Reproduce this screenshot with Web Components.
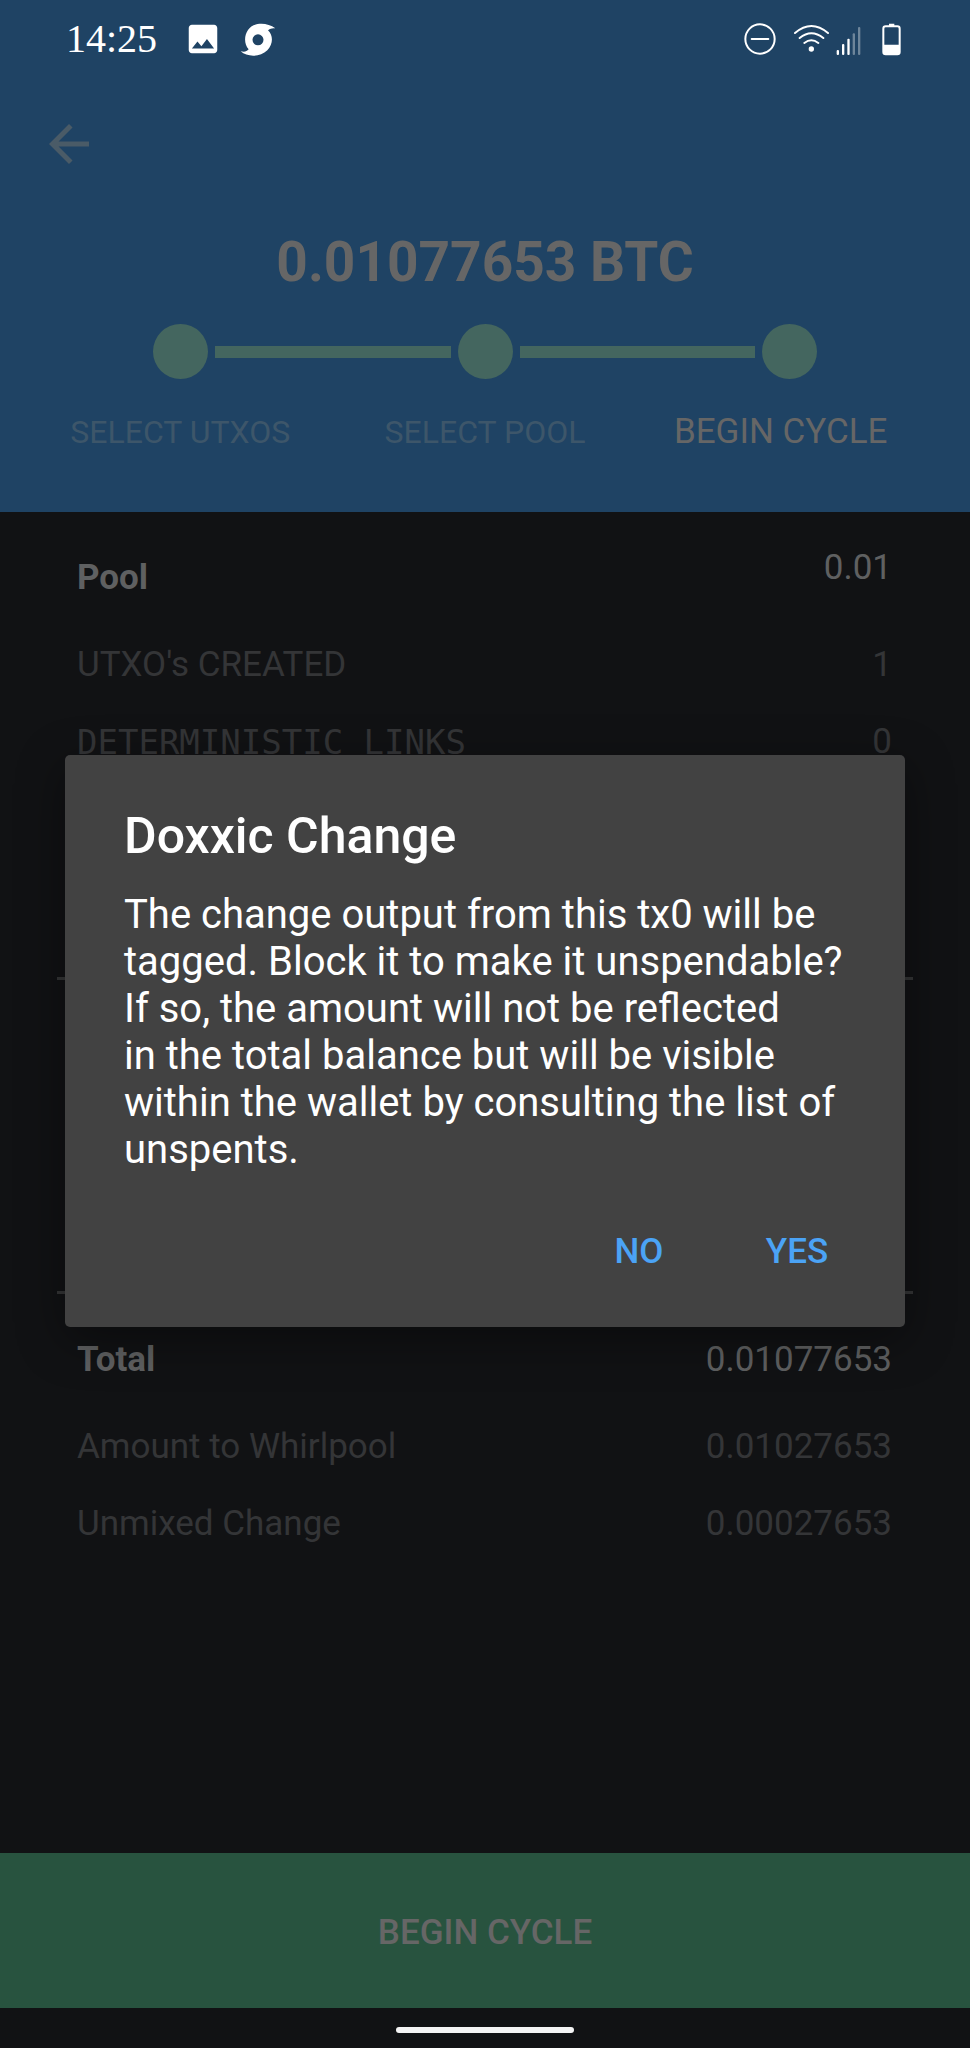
<!DOCTYPE html>
<html lang="en">
<head>
<meta charset="utf-8">
<meta name="viewport" content="width=device-width, initial-scale=1">
<title>Begin Cycle</title>
<style>
  html { background: #111214; }
  body { margin: 0; font-family: Roboto, "Liberation Sans", sans-serif; }
</style>
</head>
<body>
<whirlpool-screen></whirlpool-screen>

<script>
const define = (name, html) => {
  const template = document.createElement('template');
  template.innerHTML = html;
  customElements.define(name, class extends HTMLElement {
    constructor() {
      super();
      this.attachShadow({ mode: 'open' }).append(template.content.cloneNode(true));
    }
  });
};

define('status-bar', `
  <style>
    :host { display: flex; align-items: center; justify-content: space-between; height: 78px; padding: 0 69px 0 66px; color: #fff; }
    div { display: flex; align-items: center; }
    time { font: 40px/44px "Liberation Serif", serif; margin-right: 27px; }
    svg { display: block; height: 33px; fill: currentColor; }
    .image { width: 38px; height: 38px; margin-right: 18px; }
    .line { fill: none; stroke: currentColor; stroke-width: 6; stroke-linecap: round; }
    .dnd { margin-right: 18px; }
    .wifi { margin-right: 7px; }
    .signal { margin-right: 21px; }
    .off { opacity: .35; }
  </style>
  <div>
    <time>14:25</time>
    <svg class="image" viewBox="0 0 24 24"><path d="M21 19V5c0-1.100-.9-2-2-2H5c-1.100 0-2 .9-2 2v14c0 1.100.9 2 2 2h14c1.100 0 2-.9 2-2zM8.500 13.500l2.500 3.010L14.500 12l4.500 6H5l3.500-4.500z"/></svg>
    <svg width="37" viewBox="720 66 111 99"><path fill-rule="evenodd" d="M826 82C800 62 758 64 744 87C732 104 732 129 746 145C740 153 732 153 722 151C742 169 780 169 802 148C820 128 820 104 804 88C812 82 820 82 826 82ZM774 100a16.500 16.500 0 1 1 0 33a16.500 16.500 0 1 1 0-33Z"/></svg>
  </div>
  <div>
    <svg class="dnd" width="32" viewBox="133 66 96 99"><circle class="line" cx="181" cy="114" r="44"/><path class="line" d="M156 114H206"/></svg>
    <svg class="wifi" width="35" viewBox="282 66 105 99"><path class="line" d="M285 96Q334 54 384 96M299 111Q334 82 370 111M313 126Q334 110 355 126"/><circle cx="334" cy="144" r="8"/></svg>
    <svg class="signal" width="25" viewBox="408 66 75 99"><rect x="410" y="147" width="7" height="15" rx="3"/><rect x="426" y="129" width="7" height="33" rx="3"/><rect x="442" y="113" width="7" height="49" rx="3"/><g class="off"><rect x="458" y="97" width="7" height="65" rx="3"/><rect x="474" y="78" width="7" height="84" rx="3"/></g></svg>
    <svg width="19" viewBox="546 66 57 99"><path fill-rule="evenodd" d="M567 68H583V73H592Q602 73 602 83V153Q602 163 592 163H557Q547 163 547 153V83Q547 73 557 73H567ZM557 79Q553 79 553 83V131H596V83Q596 79 592 79Z"/></svg>
  </div>`);

define('step-track', `
  <style>
    :host { display: flex; align-items: center; padding: 0 153px; color: #44665f; }
    i { width: 55px; height: 55px; border-radius: 50%; background: currentColor; }
    b { flex: 1; height: 12px; margin: 0 7px; background: currentColor; }
  </style>
  <i></i><b></b><i></i><b></b><i></i>`);

define('cycle-header', `
  <style>
    :host { display: block; background: #1f4364; color: #666; padding-bottom: 60px; }
    button { display: block; margin: 36px 0 0 39px; padding: 0; border: 0; background: none; color: #4a5b67; }
    svg { display: block; width: 60px; height: 60px; fill: currentColor; }
    h1 { margin: 56px 0 30px; font-size: 55px; line-height: 64px; font-weight: 700; text-align: center; }
    nav { display: grid; grid-template-columns: repeat(3, 1fr); align-items: baseline; text-align: center; margin-top: 33px; padding: 0 28px; font-size: 32px; line-height: 40px; color: #3d566a; }
    strong { padding-right: 18px; font-size: 35px; font-weight: 400; color: #666; }
  </style>
  <status-bar></status-bar>
  <button aria-label="Back"><svg viewBox="0 0 24 24"><path d="M20 11H7.830l5.590-5.590L12 4l-8 8 8 8 1.410-1.410L7.830 13H20v-2z"/></svg></button>
  <h1><slot></slot></h1>
  <step-track></step-track>
  <nav><span>SELECT UTXOS</span><span>SELECT POOL</span><strong>BEGIN CYCLE</strong></nav>`);

define('summary-section', `
  <style>
    :host { display: flex; flex-direction: column; gap: 29px; box-sizing: border-box; margin: 0 57px; padding: 42px 21px 40px 20px; }
    :host([divided]) { border-bottom: 3px solid #343536; }
    :host([size="large"]) { min-height: 468px; }
    :host([size="medium"]) { min-height: 314px; }
  </style>
  <slot></slot>`);

define('summary-row', `
  <style>
    :host { display: flex; justify-content: space-between; font-size: 35px; line-height: 48px; color: #343537; }
    :host([heading]) { color: #5f6061; margin-bottom: 10px; }
    :host([heading]) .label { font-weight: 700; }
    :host([mono]) .label { font-family: "DejaVu Sans Mono", monospace; font-size: 34px; }
    :host([raised]) { margin-top: -10px; }
    :host([raised]) .label { padding-top: 10px; }
  </style>
  <span class="label"><slot></slot></span><slot name="value"></slot>`);

define('confirm-dialog', `
  <style>
    :host { position: absolute; inset: 0; box-sizing: border-box; padding: 78px 65px 44px; display: grid; align-items: center; }
    section { background: #424242; color: #fff; border-radius: 5px; padding: 51px 33px 30px 59px; box-shadow: 0 12px 48px rgba(0, 0, 0, .4); }
    h2 { margin: 0 0 25px; font-size: 50px; line-height: 60px; font-weight: 500; }
    p { margin: 0 26px 34px 0; font-size: 40px; line-height: 47px; }
    footer { display: flex; justify-content: flex-end; gap: 8px; }
    button { min-width: 150px; height: 90px; padding: 0; border: 0; background: none; color: #4ba3f5; font: 500 35px/48px Roboto, sans-serif; }
  </style>
  <section role="dialog" aria-labelledby="title">
    <h2 id="title"><slot name="title"></slot></h2>
    <p><slot></slot></p>
    <footer><button>NO</button><button>YES</button></footer>
  </section>`);

define('action-bar', `
  <style>
    :host { display: block; margin-top: auto; }
    button { display: block; width: 100%; height: 155px; padding: 4px 0 0; border: 0; background: #28533f; color: #666; font: 500 35px/48px Roboto, sans-serif; }
  </style>
  <button><slot></slot></button>`);

define('gesture-bar', `
  <style>
    :host { display: flex; align-items: center; justify-content: center; height: 40px; }
    i { width: 178px; height: 6px; margin-top: 4px; border-radius: 3px; background: #f4f4f4; }
  </style>
  <i></i>`);

define('whirlpool-screen', `
  <style>
    :host { position: relative; display: flex; flex-direction: column; min-height: 100vh; background: #111214; }
  </style>
  <cycle-header>0.01077653 BTC</cycle-header>
  <main>
    <summary-section divided size="large">
      <summary-row heading raised>Pool<span slot="value">0.01</span></summary-row>
      <summary-row>UTXO's CREATED<span slot="value">1</span></summary-row>
      <summary-row mono>DETERMINISTIC LINKS<span slot="value">0</span></summary-row>
    </summary-section>
    <summary-section divided size="medium"></summary-section>
    <summary-section>
      <summary-row heading>Total<span slot="value">0.01077653</span></summary-row>
      <summary-row>Amount to Whirlpool<span slot="value">0.01027653</span></summary-row>
      <summary-row>Unmixed Change<span slot="value">0.00027653</span></summary-row>
    </summary-section>
  </main>
  <action-bar>BEGIN CYCLE</action-bar>
  <gesture-bar></gesture-bar>
  <confirm-dialog>
    <span slot="title">Doxxic Change</span>
    The change output from this tx0 will be tagged. Block it to make it unspendable? If so, the amount will not be reflected<br>in the total balance but will be visible within the wallet by consulting the list of unspents.
  </confirm-dialog>`);
</script>
</body>
</html>
